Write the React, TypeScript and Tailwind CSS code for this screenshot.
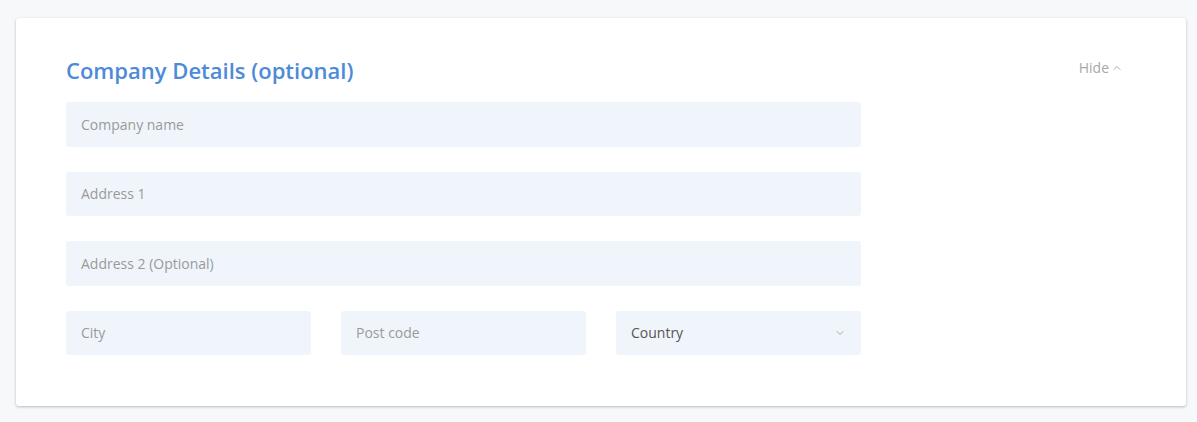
import { ChevronDown, ChevronUp } from 'lucide-react';

const font = { fontFamily: '"Open Sans", "Liberation Sans", sans-serif' };

function Field({ placeholder }: { placeholder: string }) {
  return (
    <input
      placeholder={placeholder}
      className="h-[44.5px] w-full rounded-[3px] bg-[#f0f5fc] px-[15px] text-[14px] text-[#555] placeholder:text-[#9a9a9a] outline-none"
    />
  );
}

export default function App() {
  return (
    <div className="min-h-screen bg-[#f7f8fa] pl-4 pr-[11px] pt-[18px] pb-4" style={font}>
      <div className="rounded-[3px] bg-white shadow-[0_1px_3px_rgba(0,0,0,0.25)] pl-[50px] pr-[63px] pt-[37px] pb-[51px]">
        <div className="flex items-start justify-between">
          <h2 className="text-[22px] leading-[30px] font-semibold text-[#4d8ad9]">Company Details (optional)</h2>
          <button className="mt-[3px] flex items-center gap-[2px] text-[14px] leading-[20px] text-[#a8a8a8]">
            Hide
            <ChevronUp size={12} strokeWidth={2} />
          </button>
        </div>
        <div className="mt-[17px] flex w-[795px] flex-col gap-[25px]">
          <Field placeholder="Company name" />
          <Field placeholder="Address 1" />
          <Field placeholder="Address 2 (Optional)" />
          <div className="grid grid-cols-3 gap-[30px]">
            <Field placeholder="City" />
            <Field placeholder="Post code" />
            <div className="flex h-[44.5px] items-center justify-between rounded-[3px] bg-[#f0f5fc] px-[15px] text-[14px] text-[#555]">
              <span>Country</span>
              <ChevronDown size={12} className="text-[#aaa]" />
            </div>
          </div>
        </div>
      </div>
    </div>
  );
}
